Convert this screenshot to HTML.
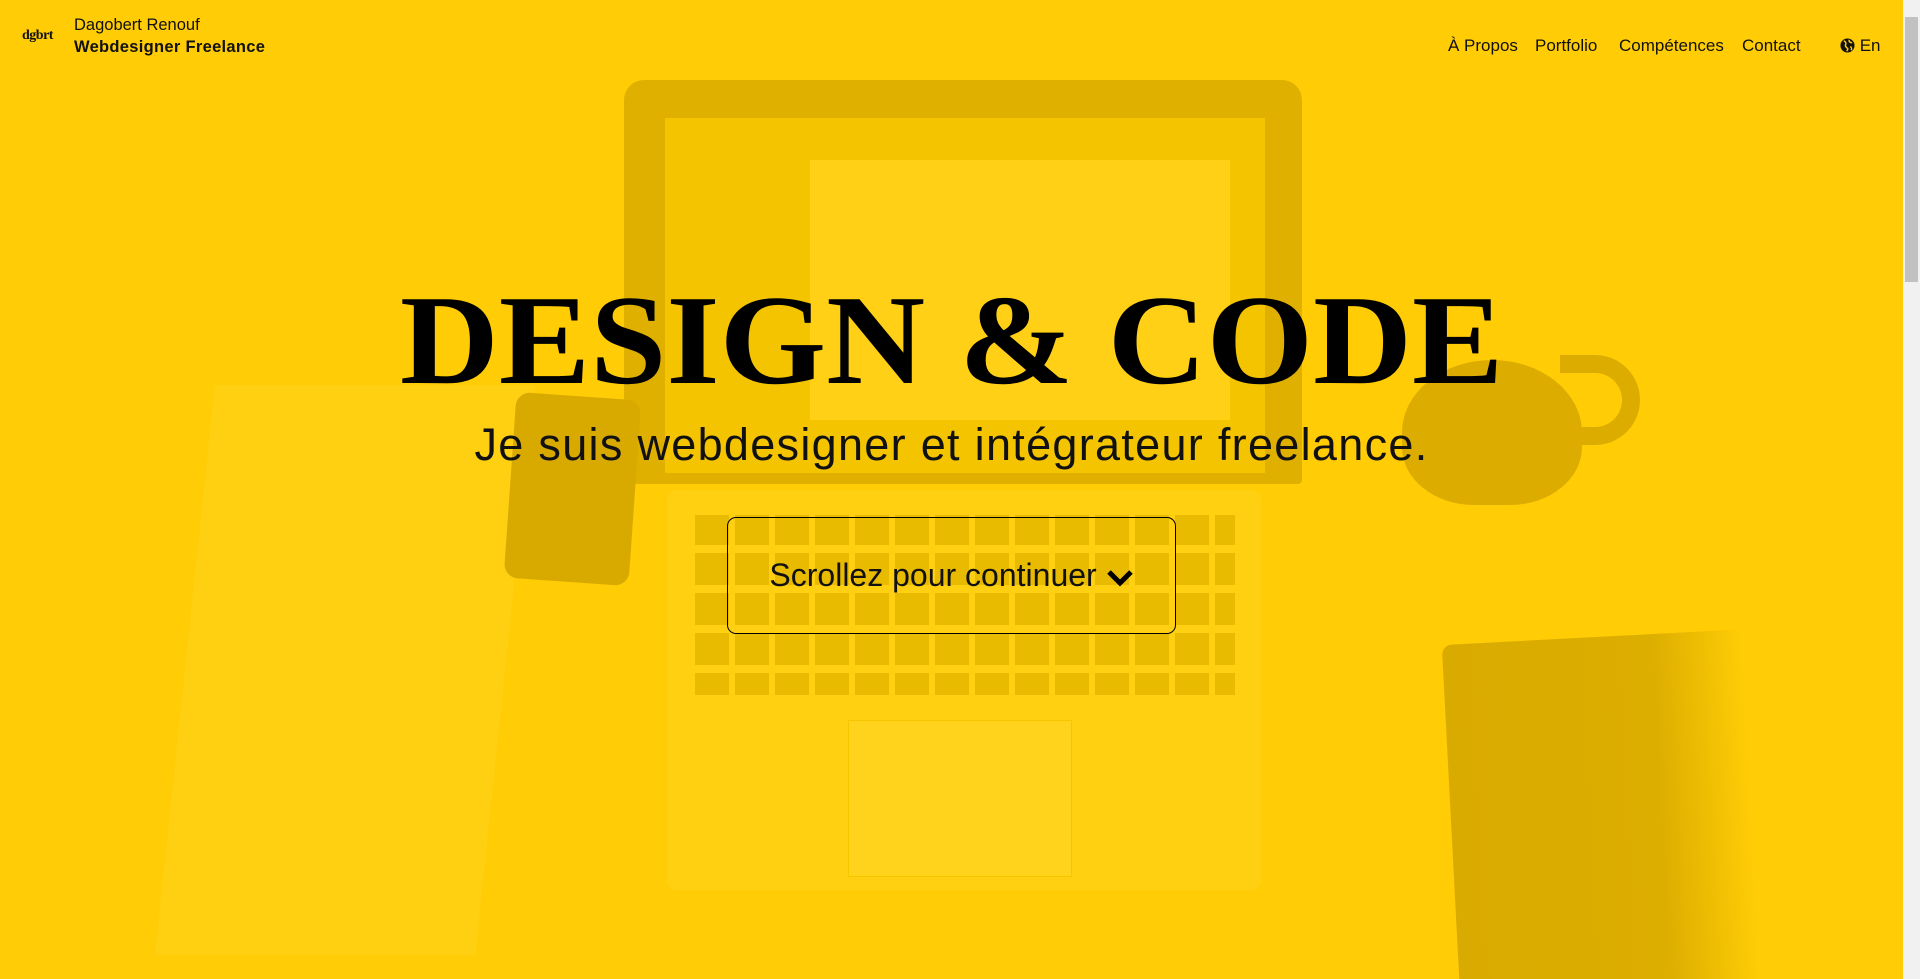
<!DOCTYPE html>
<html><head><meta charset="utf-8"><style>
html,body{margin:0;padding:0;width:1920px;height:979px;overflow:hidden;background:#ffcc06;font-family:"Liberation Sans",sans-serif;color:#111}
.bg{position:absolute;left:0;top:0;width:1903px;height:979px;background:#ffcc06;overflow:hidden}
.s{position:absolute}
.sb{position:absolute;right:0;top:0;width:17px;height:979px;background:#f1f1f1}
.sb .t{position:absolute;left:2px;top:17px;width:13px;height:265px;background:#c1c1c1}
.logo{position:absolute;left:22px;top:28px;font-family:"Liberation Serif",serif;font-weight:bold;font-size:14px;letter-spacing:-0.5px}
.brand{position:absolute;left:74px;top:14px;font-size:16.5px;line-height:22px}
.brand b{display:block;font-size:16.5px;letter-spacing:0.3px}
.nav{position:absolute;top:36px;font-size:17px}
h1{position:absolute;left:0;width:1903px;top:265px;margin:0;text-align:center;font-family:"Liberation Serif",serif;font-weight:bold;font-size:128px;line-height:150px;color:#000}
h1 span{display:inline-block;transform:scaleX(1.07);letter-spacing:0px}
.sub{position:absolute;left:0;width:1903px;top:419px;text-align:center;font-size:45px;font-weight:300;color:#111;letter-spacing:1.3px}
.btn{position:absolute;left:727px;top:517px;width:447px;height:115px;border:1px solid #000;border-radius:9px;box-sizing:content-box;text-align:center;line-height:115px;font-size:32px;color:#111}
</style></head><body>
<div class="bg">
 <div class="s" style="left:185px;top:385px;width:320px;height:570px;background:#ffcf12;transform:skewX(-6deg)"></div>
 <div class="s" style="left:624px;top:80px;width:678px;height:404px;background:#dfb000;border-radius:20px 20px 4px 4px"></div>
 <div class="s" style="left:665px;top:118px;width:600px;height:355px;background:#f4c400"></div>
 <div class="s" style="left:810px;top:160px;width:420px;height:260px;background:#ffd015"></div>
 <div class="s" style="left:667px;top:490px;width:594px;height:400px;background:#ffd012;border-radius:10px"></div>
 <div class="s" style="left:695px;top:515px;width:540px;height:180px;background:repeating-linear-gradient(90deg,#e8ba00 0 34px,#ffd012 34px 40px)"></div>
 <div class="s" style="left:695px;top:545px;width:540px;height:8px;background:#ffd012"></div>
 <div class="s" style="left:695px;top:585px;width:540px;height:8px;background:#ffd012"></div>
 <div class="s" style="left:695px;top:625px;width:540px;height:8px;background:#ffd012"></div>
 <div class="s" style="left:695px;top:665px;width:540px;height:8px;background:#ffd012"></div>
 <div class="s" style="left:848px;top:720px;width:222px;height:155px;background:#ffd21c;border:1px solid #f5c600"></div>
 <div class="s" style="left:510px;top:396px;width:125px;height:186px;background:#d8aa00;border-radius:14px;transform:rotate(4deg)"></div>
 <div class="s" style="left:1402px;top:360px;width:180px;height:145px;background:#dcad00;border-radius:50% 50% 40% 40%"></div>
 <div class="s" style="left:1560px;top:355px;width:80px;height:90px;border:18px solid #dcad00;border-left:none;border-radius:0 45px 45px 0;box-sizing:border-box"></div>
 <div class="s" style="left:1451px;top:637px;width:300px;height:360px;background:linear-gradient(90deg,#d9aa00,#dcae00 70%,#ffcc06);border-radius:10px;transform:rotate(-3deg)"></div>
</div>
<div class="logo">dgbrt</div>
<div class="brand">Dagobert Renouf<b>Webdesigner Freelance</b></div>
<div class="nav" style="left:1448px">À Propos</div>
<div class="nav" style="left:1535px">Portfolio</div>
<div class="nav" style="left:1619px">Compétences</div>
<div class="nav" style="left:1742px">Contact</div>
<div class="nav" style="left:1840px"><svg width="15" height="15" viewBox="0 0 16 16" style="vertical-align:-2px"><circle cx="8" cy="8" r="7.5" fill="#111"/><path d="M4 3c2 1 3 2 2 4s1 3 2 4-1 3-1 3M10 2c-1 2 1 3 3 3M11 9c1 1 2 2 1 4" stroke="#ffcc06" stroke-width="1.6" fill="none"/></svg> En</div>
<h1><span>DESIGN &amp; CODE</span></h1>
<div class="sub">Je suis webdesigner et intégrateur freelance.</div>
<div class="btn">Scrollez pour continuer <svg width="28" height="20" viewBox="0 0 28 20" style="vertical-align:-1px"><path d="M3 5l11 11 11-11" stroke="#000" stroke-width="5" fill="none"/></svg></div>
<div class="sb"><div class="t"></div></div>
</body></html>
